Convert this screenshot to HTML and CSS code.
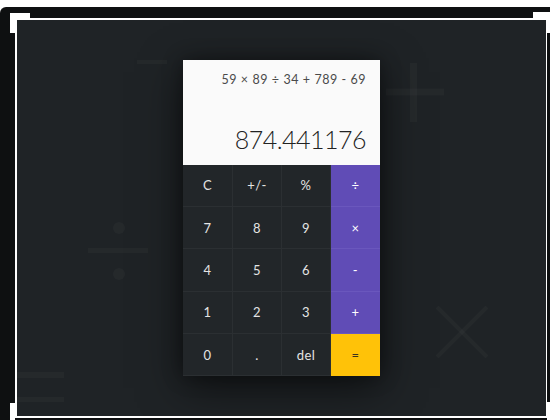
FILE: index.html
```html
<!DOCTYPE html>
<html>
<head>
<meta charset="utf-8">
<link rel="stylesheet" href="styles.css">
</head>
<body>
<div class="frame">
  <span class="patch patch-tl"></span>
  <span class="patch patch-tr"></span>
  <span class="patch patch-br"></span>
  <span class="patch patch-bl"></span>
  <div class="panel">
    <svg class="ghosts" width="529" height="396" viewBox="0 0 529 396">
      <g stroke="rgba(255,255,255,0.028)" fill="none" stroke-linecap="butt">
        <line x1="120" y1="42" x2="150" y2="42" stroke-width="4"/>
        <line x1="369" y1="72" x2="427" y2="72" stroke-width="7"/>
        <line x1="396.5" y1="43" x2="396.5" y2="102" stroke-width="7"/>
        <line x1="71" y1="230.5" x2="131" y2="230.5" stroke-width="5"/>
        <line x1="420" y1="287" x2="470" y2="337" stroke-width="4"/>
        <line x1="470" y1="287" x2="420" y2="337" stroke-width="4"/>
        <line x1="0" y1="355" x2="47" y2="355" stroke-width="6"/>
        <line x1="0" y1="379.5" x2="47" y2="379.5" stroke-width="5"/>
      </g>
      <g fill="rgba(255,255,255,0.028)">
        <circle cx="102" cy="208" r="6"/>
        <circle cx="102" cy="254" r="6"/>
      </g>
    </svg>
    <div class="calc">
      <div class="display">
        <div class="expr">59 × 89 ÷ 34 + 789 - 69</div>
        <div class="result">874.441176</div>
      </div>
      <div class="keys">
        <div class="key">C</div>
        <div class="key">+/-</div>
        <div class="key">%</div>
        <div class="key op">÷</div>
        <div class="key">7</div>
        <div class="key">8</div>
        <div class="key">9</div>
        <div class="key op">×</div>
        <div class="key">4</div>
        <div class="key">5</div>
        <div class="key">6</div>
        <div class="key op">-</div>
        <div class="key">1</div>
        <div class="key">2</div>
        <div class="key">3</div>
        <div class="key op">+</div>
        <div class="key">0</div>
        <div class="key">.</div>
        <div class="key">del</div>
        <div class="key eq">=</div>
      </div>
    </div>
  </div>
</div>
</body>
</html>
```
FILE: styles.css
```css
html, body {
  margin: 0;
  padding: 0;
}
body {
  background: #ffffff;
  width: 550px;
  height: 420px;
  overflow: hidden;
  font-family: "Lato", "Open Sans", sans-serif;
}
.frame {
  position: relative;
  margin-top: 7px;
  height: 413px;
  box-sizing: border-box;
  padding: 11px 3px 2px 15px;
  background: #0e1011;
  border-top-left-radius: 6px;
}
.patch {
  position: absolute;
  background: #ffffff;
}
.patch-tl {
  left: 10px;
  top: 6px;
  width: 20px;
  height: 20px;
}
.patch-tr {
  right: 0;
  top: 5px;
  width: 17px;
  height: 21px;
}
.patch-br {
  right: 0;
  top: 395px;
  width: 3px;
  height: 18px;
}
.patch-bl {
  left: 10px;
  top: 396px;
  width: 5px;
  height: 17px;
}
.panel {
  position: relative;
  height: 100%;
  box-sizing: border-box;
  border: 2px solid #ffffff;
  border-right-width: 1px;
  background: #1f2326;
  display: flex;
  align-items: center;
  justify-content: center;
  overflow: hidden;
}
.ghosts {
  position: absolute;
  left: 0;
  top: 0;
}
.calc {
  position: relative;
  width: 197px;
  box-shadow: 0 12px 40px rgba(0, 0, 0, 0.55), 0 0 18px rgba(0, 0, 0, 0.35);
}
.display {
  background: #fafafa;
  height: 105px;
  box-sizing: border-box;
  padding: 12px 14px 0 10px;
  display: flex;
  flex-direction: column;
  align-items: flex-end;
}
.expr {
  font-size: 12.5px;
  color: #4a4a4a;
  line-height: 16px;
  letter-spacing: 0.45px;
  word-spacing: 0.3px;
}
.result {
  margin-top: 36px;
  font-size: 25px;
  font-weight: 300;
  color: #222;
  line-height: 30px;
  letter-spacing: -0.5px;
}
.keys {
  display: grid;
  grid-template-columns: 50px 49px 49px 49px;
  grid-auto-rows: 42.4px;
  background: #222629;
}
.key {
  display: flex;
  align-items: center;
  justify-content: center;
  font-size: 13px;
  color: #e4e4e4;
  border-right: 1px solid #2b2f32;
  border-bottom: 1px solid #2b2f32;
  box-sizing: border-box;
  letter-spacing: 0.5px;
}
.key.op {
  background: #604cb6;
  color: #ffffff;
  border-right: none;
  border-bottom: 1px solid #6a57bd;
}
.key.eq {
  background: #ffc208;
  color: #3a3320;
  border: none;
}
```
